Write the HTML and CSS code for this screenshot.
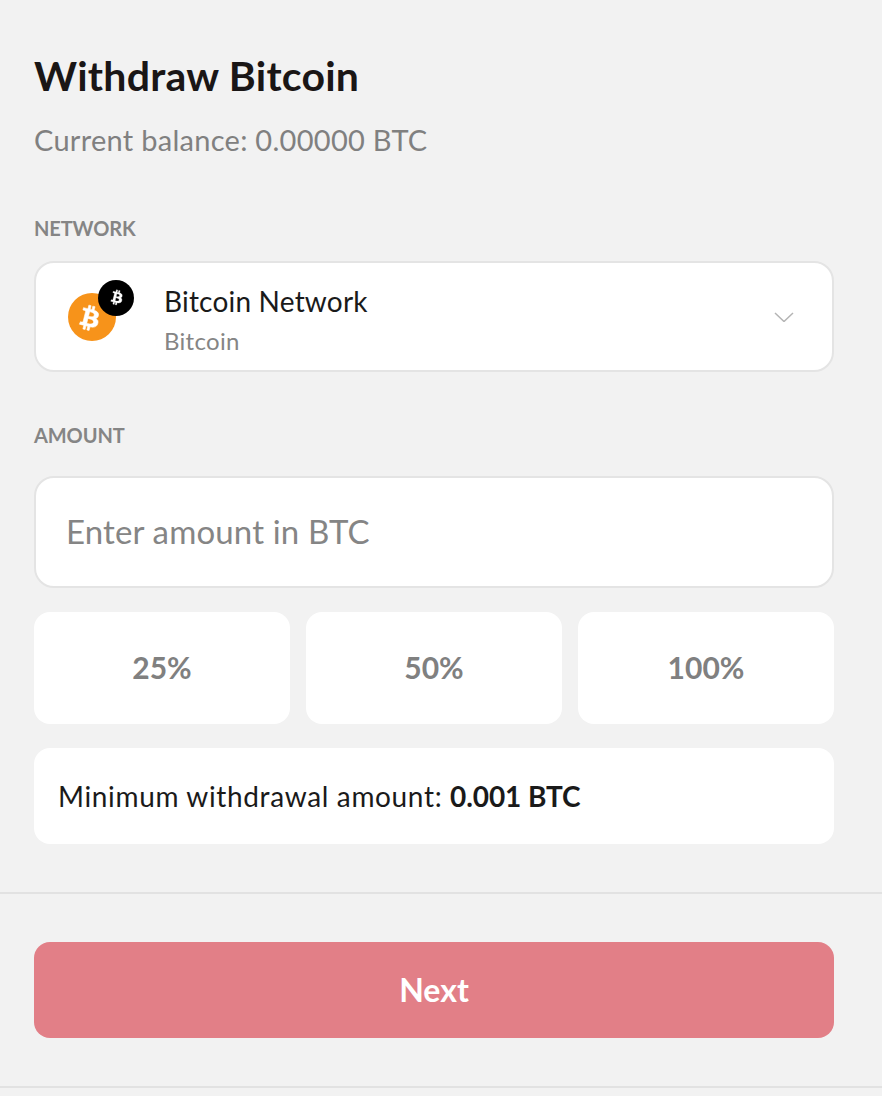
FILE: index.html
```html
<!DOCTYPE html>
<html lang="en">
<head>
<meta charset="utf-8">
<title>Withdraw Bitcoin</title>
<link rel="stylesheet" href="styles.css">
</head>
<body>
<main class="page">
  <section class="content">
    <h1 class="title">Withdraw Bitcoin</h1>
    <p class="balance">Current balance: 0.00000 BTC</p>
    <div class="label label-network">NETWORK</div>
    <div class="select">
      <div class="coin">
        <svg class="coin-svg" viewBox="0 0 68 64" width="68" height="64" aria-hidden="true">
          <circle cx="26" cy="39" r="24" fill="#f7931a"/>
          <g transform="translate(3.500 20) scale(1.667)"><path fill="#fff" stroke="#fff" stroke-width=".35" d="M17.415 10.39c.24-1.59-.974-2.45-2.64-3.03l.54-2.153-1.315-.33-.525 2.107c-.345-.087-.705-.167-1.064-.25l.526-2.127-1.32-.33-.54 2.165c-.285-.067-.565-.132-.84-.2l-1.815-.45-.35 1.407s.975.225.955.236c.535.136.63.486.615.766l-1.477 5.92c-.075.166-.24.406-.614.314.015.02-.96-.24-.96-.24l-.66 1.51 1.71.426.93.242-.54 2.19 1.32.327.54-2.17c.36.1.705.19 1.05.273l-.51 2.154 1.32.33.545-2.19c2.24.427 3.93.257 4.64-1.774.57-1.637-.03-2.58-1.217-3.196.854-.193 1.5-.76 1.68-1.93h.01zm-3.01 4.22c-.404 1.64-3.157.75-4.05.53l.72-2.9c.896.23 3.757.67 3.33 2.37zm.41-4.24c-.37 1.49-2.662.735-3.405.55l.654-2.64c.744.18 3.137.524 2.75 2.084v.006z"/></g>
          <circle cx="50" cy="20" r="18" fill="#000"/>
          <g transform="translate(38.800 7.500)"><path fill="#fff" stroke="#fff" stroke-width=".3" d="M17.415 10.39c.24-1.59-.974-2.45-2.64-3.03l.54-2.153-1.315-.33-.525 2.107c-.345-.087-.705-.167-1.064-.25l.526-2.127-1.32-.33-.54 2.165c-.285-.067-.565-.132-.84-.2l-1.815-.45-.35 1.407s.975.225.955.236c.535.136.63.486.615.766l-1.477 5.92c-.075.166-.24.406-.614.314.015.02-.96-.24-.96-.24l-.66 1.51 1.71.426.93.242-.54 2.19 1.32.327.54-2.17c.36.1.705.19 1.05.273l-.51 2.154 1.32.33.545-2.19c2.24.427 3.93.257 4.64-1.774.57-1.637-.03-2.58-1.217-3.196.854-.193 1.5-.76 1.68-1.93h.01zm-3.01 4.22c-.404 1.64-3.157.75-4.05.53l.72-2.9c.896.23 3.757.67 3.33 2.37zm.41-4.24c-.37 1.49-2.662.735-3.405.55l.654-2.64c.744.18 3.137.524 2.75 2.084v.006z"/></g>
        </svg>
      </div>
      <div class="select-text">
        <div class="select-name">Bitcoin Network</div>
        <div class="select-sub">Bitcoin</div>
      </div>
      <svg class="chevron" viewBox="0 0 20 10" width="20" height="10" aria-hidden="true"><path d="M1 1l9 8.500L19 1" fill="none" stroke="#b4b4b4" stroke-width="1.500"/></svg>
    </div>
    <div class="label label-amount">AMOUNT</div>
    <div class="input"><span class="placeholder">Enter amount in BTC</span></div>
    <div class="percents">
      <div class="percent">25%</div>
      <div class="percent">50%</div>
      <div class="percent">100%</div>
    </div>
    <div class="minimum">Minimum withdrawal amount:&nbsp;<strong class="minimum-value">0.001 BTC</strong></div>
  </section>
  <section class="footer">
    <div class="next">Next</div>
  </section>
</main>
</body>
</html>
```

FILE: styles.css
```css
* { box-sizing: border-box; }
html, body { margin: 0; padding: 0; }
body {
  width: 882px;
  height: 1096px;
  overflow: hidden;
  background: #f2f2f2;
  font-family: Lato, "Liberation Sans", sans-serif;
  color: #1a1a1a;
}
.page { display: flex; flex-direction: column; }
.content {
  height: 894px;
  padding: 50px 48px 0 34px;
  border-bottom: 2px solid #e2e2e2;
}
.title {
  margin: 0;
  font-size: 41px;
  line-height: 52px;
  font-weight: 700;
  letter-spacing: 0.25px;
  color: #1a1616;
}
.balance {
  margin: 18px 0 0;
  font-size: 29px;
  line-height: 40px;
  letter-spacing: 0.28px;
  color: #808080;
}
.label {
  font-size: 20px;
  line-height: 24px;
  font-weight: 700;
  color: #858585;
}
.label-network { margin-top: 56px; letter-spacing: -0.1px; }
.label-amount { margin-top: 51px; letter-spacing: -0.1px; }
.select {
  margin-top: 21px;
  height: 111px;
  display: flex;
  align-items: center;
  padding: 0 38px 0 30px;
  background: #fff;
  border: 2px solid #e4e4e4;
  border-radius: 20px;
}
.coin { width: 68px; height: 64px; flex: none; margin-top: -14px; margin-right: 30px; }
.coin-svg { display: block; }
.select-text { flex: 1; padding-top: 6px; }
.select-name { font-size: 28px; line-height: 36px; letter-spacing: 0.2px; color: #1a1a1a; }
.select-sub { margin-top: 6px; font-size: 24px; line-height: 32px; letter-spacing: 0.3px; color: #858585; }
.chevron { flex: none; }
.input {
  margin-top: 29px;
  height: 112px;
  display: flex;
  align-items: center;
  padding: 0 30px 3px;
  background: #fff;
  border: 2px solid #e4e4e4;
  border-radius: 20px;
}
.placeholder { font-size: 33px; letter-spacing: 0.15px; color: #858585; }
.percents {
  margin-top: 24px;
  display: grid;
  grid-template-columns: repeat(3, 1fr);
  gap: 16px;
}
.percent {
  height: 112px;
  display: flex;
  align-items: center;
  justify-content: center;
  padding-bottom: 2px;
  background: #fff;
  border-radius: 16px;
  font-size: 30px;
  font-weight: 700;
  color: #808080;
}
.minimum {
  margin-top: 24px;
  height: 96px;
  display: flex;
  align-items: center;
  padding: 0 24px;
  background: #fff;
  border-radius: 16px;
  font-size: 28px;
  letter-spacing: 0.65px;
  color: #1a1a1a;
}
.minimum-value { font-weight: 700; letter-spacing: -0.1px; }
.footer {
  height: 194px;
  padding: 48px 48px 0 34px;
  border-bottom: 2px solid #e2e2e2;
}
.next {
  height: 96px;
  display: flex;
  align-items: center;
  justify-content: center;
  padding-bottom: 2px;
  background: #e27f87;
  border-radius: 16px;
  font-size: 32px;
  font-weight: 700;
  color: #fff;
}
```
